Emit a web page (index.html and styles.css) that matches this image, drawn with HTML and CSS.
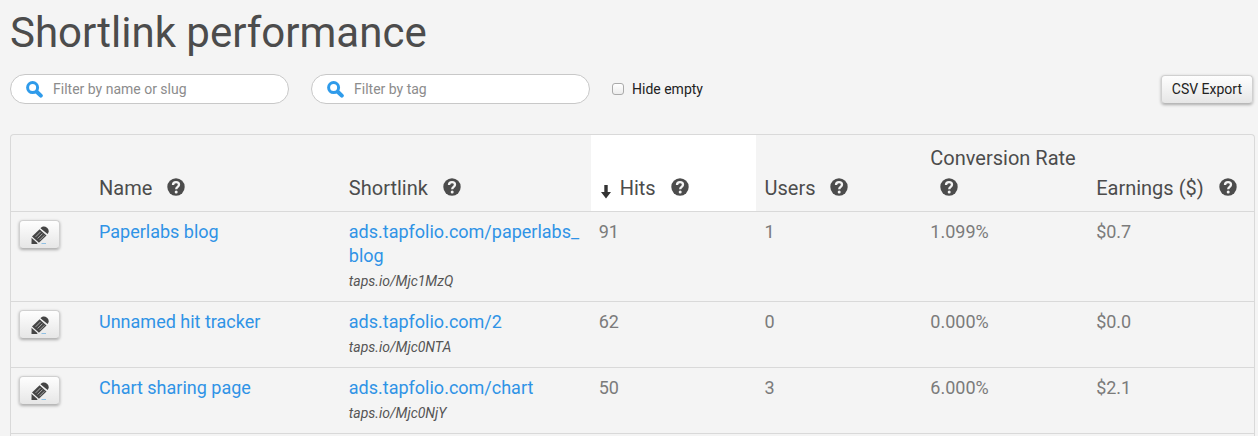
FILE: index.html
```
<!DOCTYPE html>
<html lang="en">
<head>
<meta charset="utf-8">
<title>Shortlink performance</title>
<link rel="stylesheet" href="styles.css">
</head>
<body>
<svg class="sprite" aria-hidden="true">
  <symbol id="search" viewBox="0 0 17 17">
    <circle cx="6.6" cy="6.6" r="5" fill="none" stroke="#2f9bea" stroke-width="3"/>
    <path d="M11 11l3.8 3.6" stroke="#2f9bea" stroke-width="4" stroke-linecap="round"/>
  </symbol>
  <symbol id="help" viewBox="0 0 18 18">
    <circle cx="9" cy="9" r="8.7" fill="#4c4c4c"/>
    <path d="M6 6.900C6 5 7.300 4.200 9 4.200C10.800 4.200 12 5.200 12 6.700C12 8.900 9.200 8.800 9.200 11.300" fill="none" stroke="#f4f4f4" stroke-width="2.300"/>
    <circle cx="9.200" cy="14" r="1.500" fill="#f4f4f4"/>
  </symbol>
  <symbol id="pencil" viewBox="0 0 18 18">
    <path d="M9.400 2.200C11 .3 14 0 16 1.800S18.200 6 16.600 8z" fill="#444"/>
    <path d="M8.600 3.200l6.900 6.200-7.600 7.400L1 10.600z" fill="#444"/>
    <path d="M.6 11.800L6.600 17.200l-.6.800H.5z" fill="#444"/>
    <path d="M8.900 2.700l7.200 6.200M.8 11.200l6.800 6" stroke="#eee" stroke-width=".7"/>
    <path d="M4.700 10.800l4.900-4.900M6.600 12.500l4.900-4.900M8.500 14.200l4.900-4.900" stroke="#c4c4c4" stroke-width=".8"/>
    <path d="M10.500 17.500H15" stroke="#8fc0e4" stroke-width="1"/>
  </symbol>
  <symbol id="sort" viewBox="0 0 10 14">
    <path d="M3.300 0h3.400v7H10l-5 6.500L0 7h3.300z" fill="#333"/>
  </symbol>
</svg>
<main class="page">
  <h1 class="title">Shortlink performance</h1>
  <form class="toolbar">
    <label class="filter">
      <svg class="filter-icon" aria-hidden="true"><use href="#search"/></svg>
      <input class="filter-input" type="text" placeholder="Filter by name or slug" aria-label="Filter by name or slug">
    </label>
    <label class="filter">
      <svg class="filter-icon" aria-hidden="true"><use href="#search"/></svg>
      <input class="filter-input" type="text" placeholder="Filter by tag" aria-label="Filter by tag">
    </label>
    <label class="toggle"><input class="toggle-box" type="checkbox">Hide empty</label>
    <button class="button export" type="button">CSV Export</button>
  </form>
  <div class="panel">
    <table class="report">
      <colgroup>
        <col class="col-edit"><col class="col-wide"><col class="col-wide"><col><col><col><col>
      </colgroup>
      <thead>
        <tr>
          <td></td>
          <th scope="col">Name <svg class="help"><use href="#help"/></svg></th>
          <th scope="col">Shortlink <svg class="help"><use href="#help"/></svg></th>
          <th scope="col" class="sorted" aria-sort="descending"><svg class="sort"><use href="#sort"/></svg>Hits <svg class="help"><use href="#help"/></svg></th>
          <th scope="col">Users <svg class="help"><use href="#help"/></svg></th>
          <th scope="col">Conversion Rate <svg class="help"><use href="#help"/></svg></th>
          <th scope="col">Earnings ($) <svg class="help"><use href="#help"/></svg></th>
        </tr>
      </thead>
      <tbody>
        <tr>
          <td><button class="button edit" type="button" aria-label="Edit Paperlabs blog"><svg class="pencil"><use href="#pencil"/></svg></button></td>
          <td><a href="#">Paperlabs blog</a></td>
          <td><a href="#">ads.tapfolio.com/paperlabs_<wbr>blog</a><span class="short">taps.io/Mjc1MzQ</span></td>
          <td>91</td><td>1</td><td>1.099%</td><td>$0.7</td>
        </tr>
        <tr>
          <td><button class="button edit" type="button" aria-label="Edit Unnamed hit tracker"><svg class="pencil"><use href="#pencil"/></svg></button></td>
          <td><a href="#">Unnamed hit tracker</a></td>
          <td><a href="#">ads.tapfolio.com/2</a><span class="short">taps.io/Mjc0NTA</span></td>
          <td>62</td><td>0</td><td>0.000%</td><td>$0.0</td>
        </tr>
        <tr>
          <td><button class="button edit" type="button" aria-label="Edit Chart sharing page"><svg class="pencil"><use href="#pencil"/></svg></button></td>
          <td><a href="#">Chart sharing page</a></td>
          <td><a href="#">ads.tapfolio.com/chart</a><span class="short">taps.io/Mjc0NjY</span></td>
          <td>50</td><td>3</td><td>6.000%</td><td>$2.1</td>
        </tr>
      </tbody>
    </table>
  </div>
</main>
</body>
</html>
```
FILE: styles.css
```
* { box-sizing: border-box; }

body {
  margin: 0;
  background: #f4f4f4;
  color: #4c4c4c;
  font-family: Roboto, "Liberation Sans", sans-serif;
}

.sprite {
  display: block;
  width: 0;
  height: 0;
}

.page { padding: 9px 3px 0 10px; }

.title {
  margin: 0 0 17px;
  font-size: 42px;
  line-height: 48px;
  font-weight: 400;
}

.toolbar {
  display: flex;
  align-items: center;
  gap: 22px;
  margin-bottom: 30px;
  font-size: 14px;
  color: #222;
}

.filter {
  display: flex;
  align-items: center;
  gap: 10px;
  width: 279px;
  height: 30px;
  padding: 0 15px;
  background: #fff;
  border: 1px solid #c8c8c8;
  border-radius: 15px;
}

.filter-icon {
  flex: none;
  width: 17px;
  height: 17px;
}

.filter-input {
  flex: 1;
  min-width: 0;
  padding: 0;
  border: 0;
  outline: 0;
  background: none;
  font: inherit;
}

.filter-input::placeholder { color: #8c8c8c; }

.toggle {
  display: flex;
  align-items: center;
  gap: 8px;
}

.toggle-box {
  appearance: none;
  width: 12px;
  height: 12px;
  margin: 0;
  border: 1px solid #aaa;
  border-radius: 3px;
  background: linear-gradient(#fff, #ececec);
}

.toggle-box:checked { background: #2f9bea; }

.button {
  height: 29px;
  padding: 0;
  border: 1px solid #d0d0d0;
  border-bottom-color: #b8b8b8;
  border-radius: 4px;
  background: linear-gradient(#fefefe, #e6e6e6);
  box-shadow: 0 1px 3px rgba(0, 0, 0, 0.3);
  font: inherit;
  color: #222;
}

.export {
  margin-left: auto;
  margin-right: 2px;
  padding: 0 10px;
}

.edit {
  display: flex;
  align-items: center;
  justify-content: center;
  width: 41px;
}

.pencil {
  width: 18px;
  height: 18px;
}

.panel {
  padding-bottom: 8px;
  border: 1px solid #d9d9d9;
  border-bottom: 0;
  border-radius: 4px 4px 0 0;
}

.report {
  width: 100%;
  table-layout: fixed;
  border-collapse: separate;
  border-spacing: 0;
  font-size: 18px;
  line-height: 24px;
  color: #7b7b7b;
}

.col-edit { width: 80px; }
.col-wide { width: 20.1%; }

.report th,
.report td {
  padding: 8px 8px 9px;
  border-bottom: 1px solid #d9d9d9;
  text-align: left;
  vertical-align: top;
}

.report th {
  padding-bottom: 8px;
  font-size: 20px;
  line-height: 30px;
  font-weight: 400;
  color: #4c4c4c;
  vertical-align: bottom;
}

.report .sorted { background: #fff; }

.help {
  width: 18px;
  height: 18px;
  margin-left: 10px;
  vertical-align: -1px;
}

.sort {
  width: 10px;
  height: 14px;
  margin: 0 9px 0 2px;
  vertical-align: -4px;
}

.report a {
  color: #2f93e6;
  text-decoration: none;
}

.short {
  display: block;
  padding-top: 1px;
  margin-bottom: -1px;
  font-size: 14px;
  font-style: italic;
  color: #555;
}
```
